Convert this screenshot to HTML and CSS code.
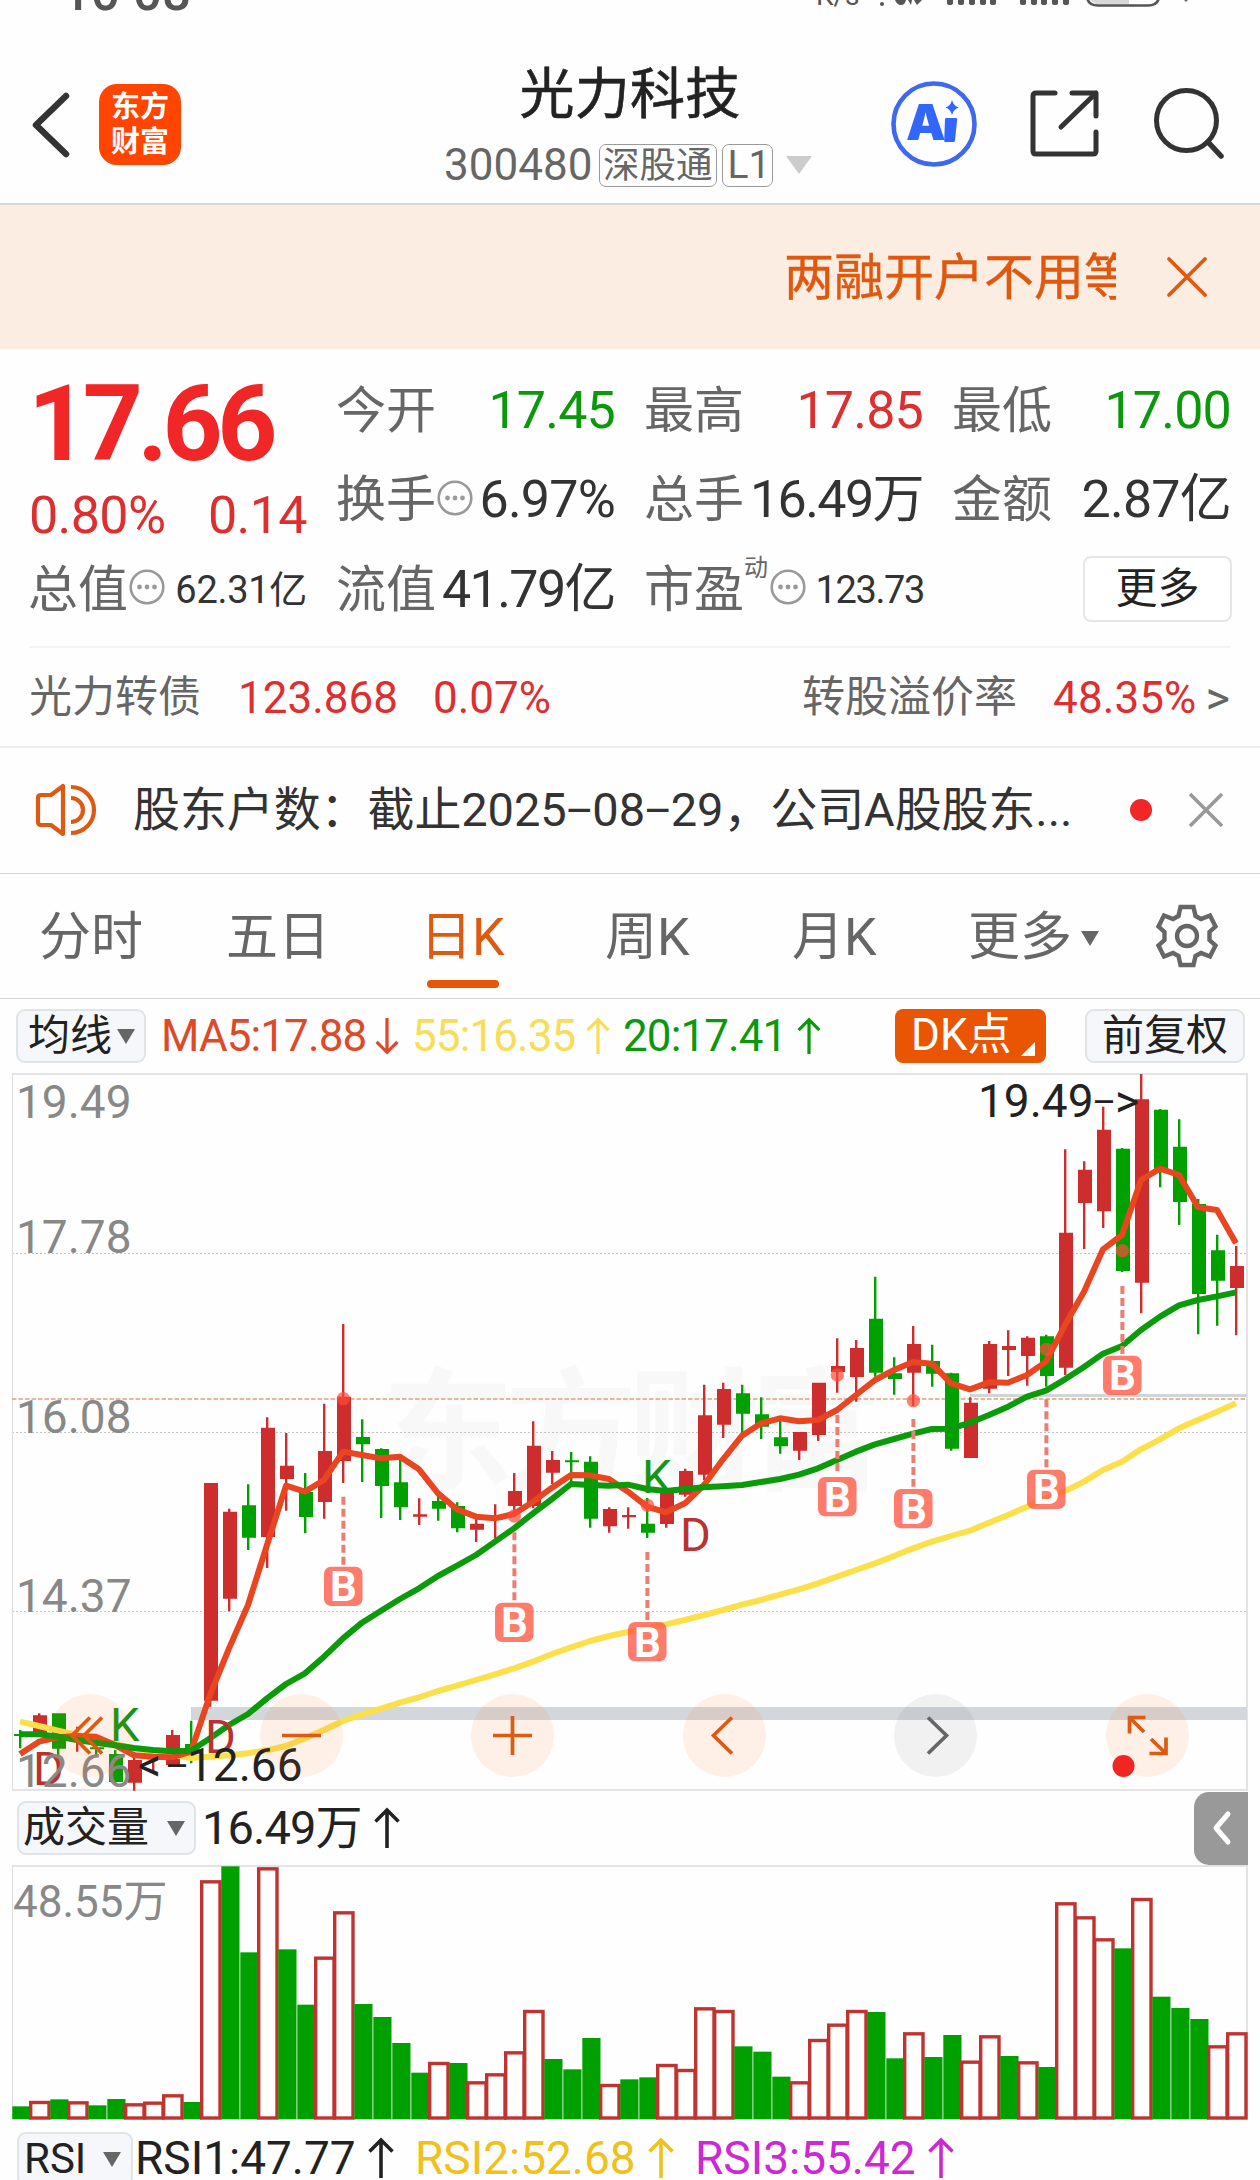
FILE: index.html
```html
<!DOCTYPE html>
<html lang="zh-CN">
<head>
<meta charset="utf-8">
<title>光力科技 300480</title>
<link rel="stylesheet" href="styles.css">
</head>
<body>
<svg class="defs" width="0" height="0">
  <defs>
    <symbol id="info" viewBox="0 0 36 36"><circle cx="18" cy="18" r="16.3" fill="none" stroke="#999" stroke-width="2.6"/><g fill="#999"><circle cx="10.5" cy="18" r="2.4"/><circle cx="18" cy="18" r="2.4"/><circle cx="25.5" cy="18" r="2.4"/></g></symbol>
    <symbol id="up" viewBox="0 0 26 42"><path d="M13 41V3M1.500 14.500L13 3L24.500 14.500" fill="none" stroke="currentColor" stroke-width="3.6"/></symbol>
    <symbol id="down" viewBox="0 0 26 42"><path d="M13 1V39M1.500 27.500L13 39L24.500 27.500" fill="none" stroke="currentColor" stroke-width="3.6"/></symbol>
    <symbol id="tri" viewBox="0 0 18 15"><path d="M0 0H18L9 15Z" fill="currentColor"/></symbol>
  </defs>
</svg>
<div class="page">
  <div class="status">
    <span class="clock">10<i>:</i>08</span>
    <span class="speed">K/s</span>
    <svg class="sys" width="320" height="12" viewBox="0 0 320 12">
      <g fill="#555"><circle cx="12" cy="4" r="2"/><path d="M25 0H36Q35 5 31 5T25 0ZM38 0H42L41 5ZM44 0H52L47 5Z"/>
      <path d="M77 0h6v3a3 2 0 0 1-6 0zM88 0h6v3a3 2 0 0 1-6 0zM99 0h6v3a3 2 0 0 1-6 0zM110 0h6v3a3 2 0 0 1-6 0zM120 0h6v3a3 2 0 0 1-6 0zM150 0h6v3a3 2 0 0 1-6 0zM161 0h6v3a3 2 0 0 1-6 0zM171 0h6v3a3 2 0 0 1-6 0zM182 0h6v3a3 2 0 0 1-6 0zM193 0h6v3a3 2 0 0 1-6 0z"/></g>
      <path d="M220 0H259V4H226Z" fill="#d8d8d8"/>
      <path d="M217 -3Q218 5.5 228 5.5H278Q288 5.5 289 -3" fill="none" stroke="#555" stroke-width="2.6"/>
      <circle cx="316" cy="0" r="1.6" fill="#666"/>
    </svg>
  </div>

  <header class="header">
    <div class="nav">
      <svg width="42" height="70" viewBox="0 0 42 70"><path d="M36 6L6 35L36 64" fill="none" stroke="#333" stroke-width="6.5" stroke-linecap="round" stroke-linejoin="round"/></svg>
      <div class="logo"><span>东方</span><span>财富</span></div>
    </div>
    <div class="title">
      <h1>光力科技</h1>
      <div class="sub"><span class="code">300480</span><span class="tag">深股通</span><span class="tag">L1</span><svg class="caret" width="26" height="18" viewBox="0 0 18 15" preserveAspectRatio="none"><path d="M0 0H18L9 15Z" fill="currentColor"/></svg></div>
    </div>
    <div class="tools">
      <svg width="86" height="86" viewBox="0 0 86 86"><circle cx="43" cy="43" r="40.5" fill="none" stroke="#3e68ee" stroke-width="4.6"/><text x="15" y="59" class="ai">A</text><path d="M55 37H65Q66.500 37 66.200 38.500L64 59.500Q63.800 61 62.300 61H54.500Q53 61 53.200 59.500L54 38.500Q54 37 55 37ZM61 19Q62.500 25 68 26.500Q62.500 28 61 34Q59.500 28 54.500 26.500Q59.500 25 61 19Z" fill="#3366ff"/></svg>
      <svg class="share" width="72" height="72" viewBox="0 0 72 72"><path d="M27 5H8Q5 5 5 8V63Q5 66 8 66H65Q68 66 68 63V44M44 5H68V28M68 5L33 39" fill="none" stroke="#333" stroke-width="5" stroke-linecap="round" stroke-linejoin="round"/></svg>
      <svg class="search" width="76" height="76" viewBox="0 0 76 76"><circle cx="34.500" cy="34.500" r="30" fill="none" stroke="#333" stroke-width="5"/><path d="M56 56L69 70" stroke="#333" stroke-width="5.500" stroke-linecap="round"/></svg>
    </div>
  </header>

  <section class="banner">
    <div class="marquee">两融开户不用等</div>
    <svg width="44" height="44" viewBox="0 0 44 44"><path d="M4 4L40 40M40 4L4 40" stroke="#e0590f" stroke-width="3.800" stroke-linecap="round"/></svg>
  </section>

  <section class="quote">
    <div class="price"><b>17.66</b><div class="change"><span>0.80%</span><span>0.14</span></div></div>
    <div class="cell"><label>今开</label><span class="green">17.45</span></div>
    <div class="cell"><label>最高</label><span class="red">17.85</span></div>
    <div class="cell"><label>最低</label><span class="green">17.00</span></div>
    <div class="cell"><label>换手</label><svg class="info"><use href="#info"/></svg><span>6.97%</span></div>
    <div class="cell"><label>总手</label><span class="tight">16.49万</span></div>
    <div class="cell"><label>金额</label><span>2.87亿</span></div>
    <div class="cell"><label>总值</label><svg class="info"><use href="#info"/></svg><span class="small">62.31亿</span></div>
    <div class="cell"><label>流值</label><span class="tight">41.79亿</span></div>
    <div class="cell"><label>市盈</label><sup>动</sup><svg class="info"><use href="#info"/></svg><span class="small pe">123.73</span></div>
    <div class="cell"><button class="more">更多</button></div>
  </section>

  <section class="bond">
    <label>光力转债</label><span class="v1">123.868</span><span class="v2">0.07%</span>
    <label class="rate">转股溢价率</label><span class="v3">48.35%</span><span class="gt">&gt;</span>
  </section>

  <section class="notice">
    <svg width="66" height="58" viewBox="0 0 66 58"><path d="M30 5V53L18 44H8Q5 44 5 41V17Q5 14 8 14H18ZM38 17A12 12 0 0 1 38 41M38 6A23 23 0 0 1 38 52" fill="none" stroke="#de5a14" stroke-width="4.200" stroke-linejoin="round"/></svg>
    <p>股东户数：截止2025<i>–</i>08<i>–</i>29，公司A股股东...</p>
    <em></em>
    <svg class="x" width="38" height="38" viewBox="0 0 38 38"><path d="M3 3L35 35M35 3L3 35" stroke="#999" stroke-width="3.600"/></svg>
  </section>

  <nav class="tabs">
    <a>分时</a><a>五日</a><a class="on">日K</a><a>周K</a><a>月K</a><a>更多<svg width="18" height="15"><use href="#tri"/></svg></a>
    <svg class="gear" width="64" height="66" viewBox="-32 -33 64 66"><path d="M-6.500 -29H6.500L8.500 -20L14 -17L23 -20.500L28.500 -9.500L22.500 -4V4L28.500 9.500L23 20.500L14 17L8.500 20L6.500 29H-6.500L-8.500 20L-14 17L-23 20.500L-28.500 9.500L-22.500 4V-4L-28.500 -9.500L-23 -20.500L-14 -17L-8.500 -20Z" fill="none" stroke="#666" stroke-width="4.400"/><circle r="10" fill="none" stroke="#666" stroke-width="4.400"/></svg>
  </nav>

  <div class="bar ma">
    <button class="pill">均线<svg width="18" height="15"><use href="#tri"/></svg></button>
    <span class="m5">MA5:17.88<svg class="arw"><use href="#down"/></svg></span>
    <span class="m55">55:16.35<svg class="arw"><use href="#up"/></svg></span>
    <span class="m20">20:17.41<svg class="arw"><use href="#up"/></svg></span>
    <button class="dk">DK点<svg width="14" height="14"><path d="M14 0V14H0Z" fill="#fff"/></svg></button>
    <button class="pill adj">前复权</button>
  </div>

  <svg id="kline" class="kline" width="1260" height="718" viewBox="0 1073 1260 718">
    <text class="mark" x="382" y="1479">东方财富</text>
    <g fill="none" stroke="#c4c4c4" stroke-dasharray="2 2"><path d="M12 1253.500H1248M12 1432.500H1248M12 1611.500H1248"/></g>
    <path d="M12 1074H1247V1790H12" fill="none" stroke="#e3e3e3" stroke-width="2"/><path d="M12.500 1074V1790" stroke="#dcdcdc"/>
    <path d="M191 1713.500H1247" stroke="#d3d7dc" stroke-width="13"/>
    <path d="M970 1395.500H1247" stroke="#d3d4d8" stroke-width="3"/>
    <path d="M12 1399H1247" stroke="#dfa07c" stroke-width="1.700" stroke-dasharray="4.500 2"/>
    <g id="candles"></g>
    <g id="lines" fill="none" stroke-width="6" stroke-linejoin="round"></g>
    <g id="marks"></g>
    <g class="kd"><text x="110" y="1741" fill="#149614">K</text><text x="33" y="1785" fill="#b83232">D</text><text x="205" y="1753" fill="#b83232">D</text><text x="642" y="1492.500" fill="#149614">K</text><text x="680" y="1551" fill="#b83232">D</text></g>
    <g class="axis"><text x="16" y="1118">19.49</text><text x="16" y="1253">17.78</text><text x="16" y="1433">16.08</text><text x="16" y="1612">14.37</text><text x="16" y="1787">12.66</text></g>
    <g class="peak"><text x="138" y="1781">&lt;</text><text x="165" y="1779" class="dash">–</text><text x="187" y="1781">12.66</text><text x="978" y="1117">19.49</text><text x="1092" y="1115" class="dash">–</text><text x="1115" y="1117">&gt;</text></g>
    <g fill="#ff6a20" fill-opacity=".1"><circle cx="90" cy="1735.500" r="41.500"/><circle cx="301.500" cy="1735.500" r="41.500"/><circle cx="512.500" cy="1735.500" r="41.500"/><circle cx="724.500" cy="1735.500" r="41.500"/><circle cx="1147.500" cy="1735.500" r="41.500"/></g>
    <circle cx="935.500" cy="1735.500" r="41.500" fill-opacity=".05"/>
    <g fill="none" stroke="#dd5a12" stroke-width="3.700"><path d="M90 1717.500L72 1735.500L90 1753.500M102 1717.500L84 1735.500L102 1753.500M282 1735.500H321M493 1735.500H532M512.500 1716V1755M732 1717.500L713.500 1735.500L732 1753.500M1145.500 1717.500H1129.500V1733.500M1129.500 1717.500L1144 1732M1149.500 1753.500H1166V1737.500M1151 1739L1166 1753.500"/><path d="M928 1717.500L946.500 1735.500L928 1753.500" stroke="#666"/></g>
    <circle cx="1123.500" cy="1766" r="11" fill="#f02622"/>
  </svg>

  <div class="bar vol">
    <button class="pill">成交量<svg width="18" height="15"><use href="#tri"/></svg></button>
    <span class="big">16.49万<svg class="arw"><use href="#up"/></svg></span>
    <div class="drawer"><svg width="24" height="40" viewBox="0 0 24 40"><path d="M18 6L6 20L18 34" fill="none" stroke="#fff" stroke-width="5" stroke-linecap="round" stroke-linejoin="round"/></svg></div>
  </div>

  <svg class="volume" width="1260" height="255" viewBox="0 1865 1260 255">
    <path d="M12 1866H1247V2119" fill="none" stroke="#e3e3e3" stroke-width="2"/><path d="M12.500 1866V2119" stroke="#dcdcdc"/>
    <text x="13" y="1917">48.55万</text>
    <g id="bars"></g>
  </svg>

  <div class="bar rsi">
    <button class="pill">RSI<svg width="18" height="15"><use href="#tri"/></svg></button>
    <span class="r1">RSI1:47.77<svg class="arw"><use href="#up"/></svg></span>
    <span class="r2">RSI2:52.68<svg class="arw"><use href="#up"/></svg></span>
    <span class="r3">RSI3:55.42<svg class="arw"><use href="#up"/></svg></span>
  </div>
</div>
<script src="chart.js"></script>
</body>
</html>
```
FILE: styles.css
```css
* { box-sizing: border-box; }
body { margin: 0; background: #fff; font-family: Roboto, "Noto Sans CJK SC", sans-serif; color: #333; }
.defs { position: absolute; }
.page { width: 1260px; height: 2180px; overflow: hidden; background: #fefefe; }
svg { display: block; flex: none; }
i, em { font-style: normal; }
button { font: inherit; padding: 0; margin: 0; color: #222; }
.page, button { white-space: nowrap; }

.status { height: 12px; display: flex; overflow: hidden; color: #555; }
.clock { width: 816px; padding-left: 62px; font-size: 51px; font-weight: 500; line-height: 50px; margin-top: -40px; }
.clock i { display: inline-block; width: 13px; overflow: hidden; transform: translateY(-9px); }
.speed { width: 54px; font-size: 28px; line-height: 30px; margin-top: -19px; }
.sys { width: 320px; }

.header { height: 193px; display: grid; grid-template-columns: 370px 520px 370px; border-bottom: 2px solid #d8d5d3; }
.nav { display: flex; align-items: flex-start; padding: 72px 0 0 30px; }
.nav > svg { margin-top: 6px; }
.logo { margin-left: 27px; width: 82px; height: 81px; border-radius: 18px; background: #ff4500; color: #fff; font-weight: 700; font-size: 29px; line-height: 35px; display: flex; flex-direction: column; align-items: center; padding-top: 6px; }
.title { display: flex; flex-direction: column; align-items: center; }
.title h1 { margin: 50px 0 0; font-size: 55px; line-height: 64px; font-weight: 400; color: #222; letter-spacing: .3px; -webkit-text-stroke: .6px #222; }
.sub { display: flex; align-items: center; height: 44px; margin-top: 17px; width: 372px; color: #666; font-size: 44px; line-height: 44px; }
.code { width: 155px; }
.tag { border: 1.500px solid #999; border-radius: 7px; height: 43px; line-height: 41px; font-size: 36.500px; padding: 0 3px; margin-right: 5px; }
.tag + .tag { font-size: 39px; padding: 0 5px; width: 51px; }
.caret { color: #ccc; margin-left: 8px; }
.tools { display: flex; padding-left: 1px; }
.tools svg { margin-top: 69px; }
.tools .share { margin: 76px 0 0 51px; }
.tools .search { margin: 74px 0 0 52px; }
.ai { font: 900 50px Inter, sans-serif; fill: #36f; }

.banner { height: 144px; background: #fcede3; display: flex; align-items: center; padding-left: 784px; }
.marquee { width: 332px; overflow: hidden; font-size: 50px; line-height: 80px; padding-top: 2px; color: #e0580e; -webkit-text-stroke: .4px #e0580e; }
.banner svg { margin-left: 49px; }

.quote { height: 299px; margin: 0 29px; padding-top: 17px; display: grid; grid-template-columns: repeat(4, 278px); grid-template-rows: repeat(3, 89.500px); column-gap: 30px; border-bottom: 2px solid #f4f4f4; font-size: 52px; letter-spacing: -.8px; }
.price { grid-row: span 2; color: #dd2f2f; }
.price b { display: block; font-size: 105px; line-height: 117px; letter-spacing: -5.500px; color: #f12626; margin-left: -1px; }
.change { display: flex; justify-content: space-between; line-height: 66px; letter-spacing: -.6px; }
.cell { display: flex; align-items: center; line-height: 70px; }
.cell label { font-size: 50px; letter-spacing: 0; color: #666; margin-left: -1px; }
.cell span { margin-left: auto; }
.cell .tight { letter-spacing: -1.600px; }
.cell .small { font-size: 38px; letter-spacing: -.300px; }
.cell .pe { letter-spacing: -1.400px; margin-right: -1px; }
.cell sup { font-size: 24px; line-height: 30px; color: #666; margin: -44px 1px 0 0; letter-spacing: 0; }
.info { width: 36px; height: 36px; margin: -5px 0 0 1px; }
.green { color: #0b980b; }
.red { color: #dd2f2f; }
.more { margin-left: auto; margin-right: -1px; width: 149px; height: 66px; border: 2px solid #e6e6e6; border-radius: 8px; background: #fff; font-size: 42px; line-height: 58px; letter-spacing: 0; margin-top: -2px; }

.bond { height: 100px; padding: 1px 29px 0; display: flex; align-items: center; border-bottom: 2px solid #eee; font-size: 44px; line-height: 60px; color: #dd2f2f; }
.bond label { font-size: 43px; color: #666; margin-top: -2px; }
.v1 { margin-left: 37px; width: 195px; }
.bond .rate { margin-left: auto; }
.v3 { margin-left: 36px; letter-spacing: .1px; }
.gt { color: #666; margin-left: 9px; font-size: 47px; margin-right: 1px; }

.notice { height: 126px; padding-left: 33px; display: flex; align-items: center; border-bottom: 1px solid #d5d5d5; font-size: 47px; line-height: 70px; }
.notice > svg, .notice em { margin-top: -2px; }
.notice p { margin: -1px 0 0 34px; width: 997px; letter-spacing: -.1px; }
.notice p i { margin: 0 -1.500px; font-size: 44px; }
.notice em { width: 22px; height: 22px; border-radius: 50%; background: #f12626; }
.notice .x { margin-left: 35px; }

.tabs { height: 125px; display: flex; align-items: center; border-bottom: 1px solid #d5d5d5; font-size: 52px; color: #666; padding-left: 39px; }
.tabs a { width: 187px; height: 124px; line-height: 70px; display: flex; align-items: center; padding-top: 4px; }
.tabs a:nth-child(2) { width: 194px; }
.tabs a:nth-child(3) { width: 185px; }
.tabs a:nth-child(5) { width: 176px; }
.tabs a svg { margin-left: 9px; }
.tabs .on { color: #de5a10; position: relative; }
.tabs .on::after { content: ""; position: absolute; left: 7px; top: 106px; width: 72px; height: 8px; border-radius: 4px; background: #e65607; }

.bar { height: 74px; display: flex; align-items: center; font-size: 44px; line-height: 54px; color: #222; }
.bar span { display: flex; align-items: center; }
.pill { height: 54px; border: 2px solid #e0e3e7; border-radius: 9px; background: #f6f7fa; font-size: 42px; line-height: 48px; display: flex; align-items: center; }
.pill svg { color: #666; }
.arw { width: 26px; height: 42px; }
.ma .pill { margin-left: 16px; width: 130px; padding-left: 10px; }
.ma .pill svg { margin-left: 5px; }
.ma .arw { width: 24px; height: 38px; }
.ma span { letter-spacing: -.9px; }
.m5 { margin-left: 15px; width: 251px; color: #dc4a2a; justify-content: space-between; padding-right: 13px; }
.m55 { width: 211px; color: #f8dd58; justify-content: space-between; padding-right: 13px; }
.m20 { width: 198px; color: #0b980b; justify-content: space-between; }
.dk { margin-left: 74px; width: 151px; height: 54px; border: 0; border-radius: 8px; background: #ea5504; color: #fff; font-size: 44px; line-height: 53px; display: flex; padding-left: 16px; }
.dk svg { margin: 33px 0 0 10px; }
.ma .adj { margin-left: 39px; width: 160px; padding-left: 15px; }

.kline text { white-space: pre; }
.mark { font: 700 132px "Noto Sans CJK SC", sans-serif; letter-spacing: -9px; fill: #f8f8f8; }
.kd { font-size: 47px; }
.axis { font-size: 46px; fill: #888; }
.peak { font-size: 46px; fill: #222; }
.dash { font-size: 37px; }
.flag { font: 700 42px Roboto, sans-serif; fill: #fff; text-anchor: middle; }

.vol .pill { margin-left: 17px; width: 179px; padding-left: 4px; }
.vol .pill svg { margin-left: 18px; }
.big { font-size: 47px; letter-spacing: -.9px; margin-left: 6px; width: 198px; justify-content: space-between; }
.drawer { margin: 0 12px 0 auto; width: 54px; height: 73px; border-radius: 15px 0 0 15px; background: #999; display: flex; align-items: center; padding-left: 16px; }
.volume { font-size: 44px; fill: #888; }

.rsi { height: 60px; padding-top: 12px; align-items: flex-start; font-size: 46px; line-height: 52px; }
.rsi .pill { margin-left: 17px; width: 116px; padding-left: 5px; }
.rsi .pill svg { margin-left: 17px; }
.r1 { margin-left: 2px; width: 259px; justify-content: space-between; }
.r2 { margin-left: 21px; width: 259px; justify-content: space-between; color: #f0c01c; }
.r3 { margin-left: 21px; width: 259px; justify-content: space-between; color: #cc29d4; }
```
FILE: chart.js
```js
// One unit is a third of a pixel, measured down from y = 1300.
const X0 = 20, STEP = 19;
const py = v => 1300 + v / 3;
const px = i => X0 + STEP * i;
const RED = '#cd2d2d', GREEN = '#00a000';

// colour, body top, body bottom, wick top, wick bottom
const candles = [
  'g 1302 1308 1290 1345', 'r 1246 1300 1240 1310', 'g 1240 1346 1240 1400', 'r 1312 1320 1280 1355', 'g 1342 1348 1338 1365',
  'g 1362 1446 1350 1450', 'r 1380 1448 1355 1472', 'r 1370 1378 1360 1415', 'r 1305 1395 1290 1398', 'g 1332 1352 1262 1390',
  'r 549 1202 549 1220', 'r 635 896 626 934', 'g 616 713 553 750', 'r 383 711 352 804', 'r 497 537 399 632',
  'g 576 651 519 700', 'r 453 606 311 656', 'r 290 483 72 549', 'g 411 433 358 546', 'g 447 558 445 654',
  'g 547 622 470 660', 'r 643 650 595 675', 'g 603 626 588 662', 'g 618 685 607 697', 'r 671 689 655 726',
  'r 654 659 613 717', 'r 573 618 519 650', 'r 437 618 364 625', 'r 480 518 453 552', 'g 481 487 456 555',
  'g 485 656 469 683', 'r 627 679 622 698', 'r 645 652 622 686', 'g 671 698 594 714', 'r 575 672 568 683',
  'r 513 584 506 590', 'r 346 524 254 540', 'r 267 374 248 414', 'g 280 341 254 400', 'g 343 380 292 417',
  'g 412 439 358 461', 'r 396 452 396 480', 'r 248 405 248 423', 'r 198 216 115 278', 'r 144 231 120 305',
  'g 56 218 -70 230', 'g 220 237 172 284', 'r 132 218 78 318', 'g 183 221 134 260', 'g 220 446 218 452',
  'r 308 474 292 474', 'r 132 266 123 280', 'r 138 150 91 228', 'r 113 168 109 257', 'g 109 228 104 260',
  'r -202 203 -452 225', 'r -391 -291 -416 -153', 'r -511 -266 -580 -216', 'g -454 -87 -456 -84', 'r -602 -52 -678 40',
  'g -571 -390 -573 -338', 'g -460 -294 -542 -225', 'g -288 -18 -303 103', 'g -149 -58 -196 77', 'r -102 -36 -162 106'
];
document.getElementById('candles').innerHTML = candles.map((row, i) => {
  const [c, a, b, t, w] = row.split(' ');
  const col = c === 'r' ? RED : GREEN;
  return `<path fill="${col}" d="M${px(i) - 6} ${py(+a)}h14V${py(+b)}h-14zM${px(i) - 1} ${py(+t)}h2.400V${py(+w)}h-2.400z"/>`;
}).join('');

const averages = [
  ['#fbe04c', [1265,1278,1292,1305,1318,1332,1345,1355,1365,1374,1370,1366,1360,1351,1338,1315,1290,1263,1243,1226,1208,1192,1173,1157,1140,1123,1105,1085,1062,1042,1023,1008,996,985,973,960,945,930,914,900,884,868,850,830,810,790,768,745,725,708,692,668,645,620,595,573,545,510,485,448,418,385,360,335,310]],
  ['#e84520', [1362,1325,1312,1308,1310,1335,1366,1370,1372,1355,1185,1045,915,735,557,575,540,455,465,475,470,508,580,628,650,655,642,605,563,525,526,537,575,620,637,610,555,478,407,370,355,364,360,330,285,240,210,186,191,250,268,247,248,225,185,75,-25,-152,-195,-360,-394,-375,-278,-270,-170]],
  ['#0a9a0a', [1303,1303,1310,1320,1328,1336,1344,1350,1354,1352,1315,1275,1242,1195,1152,1120,1070,1015,968,932,897,865,828,797,765,725,685,640,597,552,555,557,554,567,573,567,562,559,555,546,537,524,505,480,455,433,417,401,387,386,368,345,320,290,272,238,201,161,138,90,50,16,0,-11,-23]]
];
document.getElementById('lines').innerHTML = averages.map(([col, v]) =>
  `<polyline stroke="${col}" points="${v.map((y, i) => px(i) + ',' + py(y)).join(' ')}"/>`).join('');

// candle index, dot, dash start, dash end, top of the flag
const flags = [[17,296,590,795,800],[26,648,697,903,908],[33,616,756,960,966],[43,225,345,525,531],[47,302,357,560,567],[54,148,298,502,509],[58,-148,-42,162,167]];
document.getElementById('marks').innerHTML = flags.map(([i, dot, a, b, top]) => {
  const x = px(i) + .4;
  return `<circle cx="${x}" cy="${py(dot)}" r="6.7" fill="#ff4a38" fill-opacity=".7"/>
<path d="M${x} ${py(a)}V${py(b)}" stroke="#ec7d70" stroke-width="4" stroke-dasharray="8 4"/>
<rect x="${x - 19.4}" y="${py(top)}" width="38.5" height="39.3" rx="7" fill="#ff5a46" fill-opacity=".8"/>
<text class="flag" x="${x}" y="${py(top) + 34.8}">B</text>`;
}).join('');

// colour and bar top, in thirds of a pixel from y = 1780
const volumes = 'g979 r963 g958 r964 g976 g957 r970 r965 r943 g966 r301 g259 g517 r262 g508 g674 r530 r394 g672 g711 g789 g878 r846 g849 r904 r880 r814 r690 g837 g868 g774 r912 g898 g892 r852 r867 r682 r690 g799 g815 g890 r904 r777 r731 r690 g696 g835 r757 g831 g765 r842 r766 g828 r844 g861 r367 r409 r475 g505 r354 g650 g684 g717 r796 r757'.split(' ');
document.getElementById('bars').innerHTML = volumes.map((s, i) => {
  const y = 1780 + s.slice(1) / 3, x = 12.3 + STEP * i;
  return s[0] === 'g'
    ? `<rect x="${x}" y="${y}" width="18.2" height="${2119.3 - y}" fill="${GREEN}"/>`
    : `<rect x="${x - .6}" y="${y + 1.5}" width="18.3" height="${2118 - y - 1.5}" fill="#fff" stroke="#bf3431" stroke-width="3.400"/>`;
}).join('');
```
